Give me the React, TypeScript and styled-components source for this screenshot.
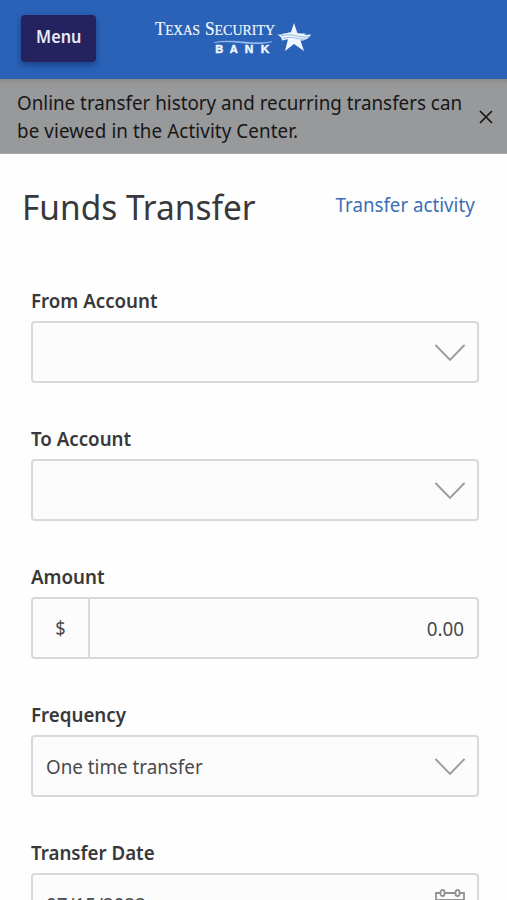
import React from "react";
import styled, { createGlobalStyle } from "styled-components";

const GlobalStyle = createGlobalStyle`
  * { box-sizing: border-box; }
  body { margin: 0; background: #fefefe; }
`;

const Screen = styled.main`
  width: 507px;
  height: 900px;
  overflow: hidden;
  background: #fefefe;
  color: #38383a;
  font-family: "Noto Sans", "Open Sans", sans-serif;
`;

/* Slightly narrowed lettering, shared by all interface text. */
const Narrow = styled.span<{ $from?: "left" | "right" | "center"; $tracking?: number }>`
  display: inline-block;
  white-space: nowrap;
  letter-spacing: ${(p) => p.$tracking ?? 0}px;
  transform: scaleX(0.955);
  transform-origin: ${(p) => p.$from ?? "left"};
`;

const Header = styled.header`
  height: 79px;
  display: grid;
  grid-template-columns: 75px 160px;
  column-gap: 58px;
  padding: 15px 0 0 21px;
  background: #2962b7;
`;

const MenuButton = styled.button`
  width: 75px;
  height: 47px;
  padding: 0 0 4px;
  border: 0;
  border-radius: 4px;
  background: #25235f;
  color: #e9eaf5;
  font: 600 17px "Noto Sans", sans-serif;
  box-shadow: 0 3px 6px rgba(10, 25, 80, 0.45);
`;

const Notice = styled.section`
  height: 75px;
  display: flex;
  align-items: center;
  justify-content: space-between;
  padding: 1px 14px 0 17px;
  background: linear-gradient(#8c8c8d, #98999a 6px);
  border-bottom: 1px solid #a6a6a7;
  color: #171718;
`;

const NoticeText = styled.p`
  width: 450px;
  margin: 0;
  font-size: 19.7px;
  line-height: 28px;
  white-space: nowrap;
`;

const CloseButton = styled.button`
  display: flex;
  padding: 0;
  border: 0;
  background: none;
  color: #171718;
`;

const TitleRow = styled.div`
  height: 106px;
  display: flex;
  justify-content: space-between;
  align-items: flex-start;
  padding: 28px 32px 0 22px;
`;

const Title = styled.h1`
  margin: 0;
  font-size: 35px;
  font-weight: 400;
  line-height: 50px;
`;

const ActivityLink = styled.a`
  margin-top: 9px;
  color: #3c6fb5;
  font-size: 19.6px;
  line-height: 28px;
`;

const Form = styled.form`
  display: grid;
  row-gap: 28px;
  padding: 27px 28px 0 31px;
`;

const Field = styled.div`
  height: 110px;
  display: flex;
  flex-direction: column;
`;

const Label = styled.label`
  height: 34px;
  font-size: 19.6px;
  font-weight: 600;
  line-height: 27px;
`;

const Control = styled.div`
  height: 62px;
  flex: none;
  display: flex;
  align-items: center;
  border: 2px solid #d9d9d9;
  border-radius: 4px;
  background: #fcfcfc;
  color: #4a4a4c;
`;

const Value = styled.span<{ $end?: boolean }>`
  flex: 1;
  padding: 2px 13px 0;
  font-size: 19.7px;
  line-height: 28px;
  text-align: ${(p) => (p.$end ? "right" : "left")};
`;

const Prefix = styled.span`
  width: 57px;
  height: 100%;
  display: grid;
  place-items: center;
  border-right: 2px solid #d9d9d9;
  font-size: 19px;
`;

const IconSlot = styled.span`
  display: flex;
  margin-right: 11px;
  padding-top: 2px;
`;

const Chevron = () => (
  <IconSlot>
    <svg width="32" height="20" viewBox="0 0 32 20" fill="none" stroke="#9b9b9b" strokeWidth="1.9" strokeLinecap="round">
      <path d="M2 2.5 16 17 30 2.5" />
    </svg>
  </IconSlot>
);

const CalendarIcon = () => (
  <IconSlot>
    <svg width="32" height="34" viewBox="0 0 32 34" fill="none" stroke="#929292" strokeWidth="1.8">
      <path d="M6 5H2v26h28V5h-4M11 5h10M2 12h28" />
      <rect x="6.5" y="2" width="4" height="6" rx="2" />
      <rect x="21.5" y="2" width="4" height="6" rx="2" />
    </svg>
  </IconSlot>
);

const Logo = () => (
  <svg width="160" height="44" viewBox="0 0 160 44" fill="#f0f6ff" role="img" aria-label="Texas Security Bank">
    <g fontFamily="Liberation Serif, serif" fontSize="14.5" stroke="#f0f6ff" strokeWidth="0.2">
      <text x="1" y="20.3" textLength="45" lengthAdjust="spacingAndGlyphs">
        <tspan fontSize="18">T</tspan>EXAS
      </text>
      <text x="51" y="20.3" textLength="70" lengthAdjust="spacingAndGlyphs">
        <tspan fontSize="18">S</tspan>ECURITY
      </text>
    </g>
    <path d="M60 27.6c18-4.6 35 2.5 58-.9-20 5.5-38-2.4-58 .9Z" fill="#a9c8f3" stroke="#a9c8f3" strokeWidth="0.4" />
    <g fontFamily="Liberation Sans, sans-serif" fontSize="10" fontWeight="700" stroke="#f0f6ff" strokeWidth="0.4">
      <text x="61.3" y="38" textLength="8" lengthAdjust="spacingAndGlyphs">B</text>
      <text x="75.7" y="38" textLength="8" lengthAdjust="spacingAndGlyphs">A</text>
      <text x="90.7" y="38" textLength="8.6" lengthAdjust="spacingAndGlyphs">N</text>
      <text x="106.7" y="38" textLength="8.6" lengthAdjust="spacingAndGlyphs">K</text>
    </g>
    <path d="m140 8 3.5 10.5h8L146 24l4 12-10-7-9 7 3-12-5-5.500h7.500Z" />
    <path d="M123 19.500c7 1 12-4 20-1.500 6 2 9 2 14 1.500-4 7.500-12 6.500-18 5.500-6-1-8 0-11 .5 0-3-2-4.500-5-6Z" />
    <path d="M127 21c12-4 18 3 28 .5M129 23.500c10-3.500 15 2 23 .500" fill="none" stroke="#6d9ad8" strokeWidth="0.7" />
  </svg>
);

export default function App() {
  return (
    <>
      <GlobalStyle />
      <Screen>
        <Header>
          <MenuButton>
            <Narrow $from="center">Menu</Narrow>
          </MenuButton>
          <Logo />
        </Header>
        <Notice>
          <NoticeText>
            <Narrow>Online transfer history and recurring transfers can</Narrow>
            <br />
            <Narrow $tracking={0.09}>be viewed in the Activity Center.</Narrow>
          </NoticeText>
          <CloseButton aria-label="Close">
            <svg width="14" height="14" viewBox="0 0 14 14" stroke="currentColor" strokeWidth="1.7">
              <path d="m1 1 12 12M13 1 1 13" />
            </svg>
          </CloseButton>
        </Notice>
        <TitleRow>
          <Title>
            <Narrow>Funds Transfer</Narrow>
          </Title>
          <ActivityLink>
            <Narrow $from="right">Transfer activity</Narrow>
          </ActivityLink>
        </TitleRow>
        <Form>
          <Field>
            <Label>
              <Narrow>From Account</Narrow>
            </Label>
            <Control>
              <Value />
              <Chevron />
            </Control>
          </Field>
          <Field>
            <Label>
              <Narrow>To Account</Narrow>
            </Label>
            <Control>
              <Value />
              <Chevron />
            </Control>
          </Field>
          <Field>
            <Label>
              <Narrow>Amount</Narrow>
            </Label>
            <Control>
              <Prefix>
                <Narrow $from="center">$</Narrow>
              </Prefix>
              <Value $end>
                <Narrow $from="right">0.00</Narrow>
              </Value>
            </Control>
          </Field>
          <Field>
            <Label>
              <Narrow>Frequency</Narrow>
            </Label>
            <Control>
              <Value>
                <Narrow>One time transfer</Narrow>
              </Value>
              <Chevron />
            </Control>
          </Field>
          <Field>
            <Label>
              <Narrow>Transfer Date</Narrow>
            </Label>
            <Control>
              <Value>
                <Narrow>07/15/2022</Narrow>
              </Value>
              <CalendarIcon />
            </Control>
          </Field>
        </Form>
      </Screen>
    </>
  );
}
